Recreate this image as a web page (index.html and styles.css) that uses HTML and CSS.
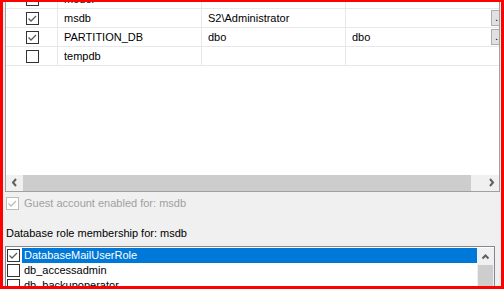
FILE: index.html
```html
<!DOCTYPE html>
<html lang="en">
<head>
    <meta charset="UTF-8">
    <title>User Mapping</title>
    <link rel="stylesheet" href="styles.css">
</head>
<body>
    <div class="frame">
        <div class="grid">
            <div class="grid-view">
                <div class="rows">
                    <div class="row">
                        <div class="cell c-check"><span class="chk"></span></div>
                        <div class="cell c-name">model</div>
                        <div class="cell c-user"></div>
                        <div class="cell c-schema"></div>
                    </div>
                    <div class="row">
                        <div class="cell c-check">
                            <span class="chk"><svg width="11" height="11" viewBox="0 0 11 11"><polyline points="1.5,5.5 4,8 9,3" fill="none" stroke="#5c5c5c" stroke-width="1.3"/></svg></span>
                        </div>
                        <div class="cell c-name">msdb</div>
                        <div class="cell c-user">S2\Administrator</div>
                        <div class="cell c-schema"><span></span><span class="ellipsis">...</span></div>
                    </div>
                    <div class="row">
                        <div class="cell c-check">
                            <span class="chk"><svg width="11" height="11" viewBox="0 0 11 11"><polyline points="1.5,5.5 4,8 9,3" fill="none" stroke="#5c5c5c" stroke-width="1.3"/></svg></span>
                        </div>
                        <div class="cell c-name">PARTITION_DB</div>
                        <div class="cell c-user">dbo</div>
                        <div class="cell c-schema"><span>dbo</span><span class="ellipsis">...</span></div>
                    </div>
                    <div class="row">
                        <div class="cell c-check"><span class="chk"></span></div>
                        <div class="cell c-name">tempdb</div>
                        <div class="cell c-user"></div>
                        <div class="cell c-schema"></div>
                    </div>
                </div>
            </div>
            <div class="hscroll">
                <div class="sb-btn"><svg width="17" height="16" viewBox="0 0 17 16"><polyline points="10,4 7,7.5 10,11" fill="none" stroke="#606060" stroke-width="2"/></svg></div>
                <div class="sb-thumb"></div>
                <div class="sb-track"></div>
                <div class="sb-btn"><svg width="17" height="16" viewBox="0 0 17 16"><polyline points="8,4 11,7.5 8,11" fill="none" stroke="#606060" stroke-width="2"/></svg></div>
            </div>
        </div>

        <div class="guest">
            <span class="chk disabled"><svg width="11" height="11" viewBox="0 0 11 11"><polyline points="1.5,5.5 4,8 9,3" fill="none" stroke="#bcbcbc" stroke-width="1.3"/></svg></span>
            <span>Guest account enabled for: msdb</span>
        </div>

        <div class="caption">Database role membership for: msdb</div>

        <div class="list">
            <div class="list-items">
                <div class="item">
                    <span class="chk"><svg width="11" height="11" viewBox="0 0 11 11"><polyline points="1.5,5.5 4,8 9,3" fill="none" stroke="#5c5c5c" stroke-width="1.3"/></svg></span>
                    <span class="item-text selected">DatabaseMailUserRole</span>
                </div>
                <div class="item">
                    <span class="chk"></span>
                    <span class="item-text">db_accessadmin</span>
                </div>
                <div class="item">
                    <span class="chk"></span>
                    <span class="item-text">db_backupoperator</span>
                </div>
            </div>
            <div class="vscroll">
                <div class="sb-btn-v"><svg width="17" height="17" viewBox="0 0 17 17"><polyline points="5.5,10.5 8.5,7.5 11.5,10.5" fill="none" stroke="#606060" stroke-width="2"/></svg></div>
                <div class="sb-thumb-v"></div>
            </div>
        </div>
    </div>
</body>
</html>
```

FILE: styles.css
```css
body {
    margin: 0;
}
.frame {
    box-sizing: border-box;
    height: 289px;
    border: 3px solid #ff0000;
    border-top-width: 2px;
    padding: 0 1px 0 2px;
    background-color: #f0f0f0;
    overflow: hidden;
    font-family: "Liberation Sans", Arial, sans-serif;
    font-size: 11px;
    color: #000;
}
.grid {
    margin-top: -13px;
    border: 1px solid #a0a0a0;
    background-color: #fff;
    overflow: hidden;
}
.grid-view {
    height: 185px;
    overflow: hidden;
}
.rows {
    width: max-content;
}
.row {
    display: flex;
    box-sizing: border-box;
    height: 19px;
    border-bottom: 1px solid #e8e8e8;
}
.cell {
    box-sizing: border-box;
    display: flex;
    align-items: center;
    border-right: 1px solid #e8e8e8;
    padding-left: 6px;
    line-height: 18px;
    white-space: nowrap;
}
.c-check {
    width: 52px;
    padding-left: 0;
    justify-content: center;
}
.c-check .chk {
    margin-left: 1px;
}
.c-name,
.c-user {
    width: 144px;
}
.c-schema {
    width: 164px;
    border-right: none;
}
.ellipsis {
    box-sizing: border-box;
    align-self: flex-start;
    width: 17px;
    height: 16px;
    margin: 1px 2px 0 auto;
    background-color: #e1e1e1;
    border: 1px solid #adadad;
    line-height: 13px;
    text-align: center;
}
.chk {
    display: inline-block;
    flex-shrink: 0;
    width: 11px;
    height: 11px;
    border: 1px solid #333;
    background-color: #fff;
}
.chk svg {
    display: block;
}
.chk.disabled {
    border-color: #bcbcbc;
}
.hscroll {
    display: flex;
    height: 16px;
    background-color: #f0f0f0;
}
.sb-btn {
    width: 17px;
    flex-shrink: 0;
}
.sb-btn svg,
.sb-btn-v svg {
    display: block;
}
.sb-thumb {
    width: 448px;
    background-color: #cdcdcd;
}
.sb-track {
    flex: 1;
}
.guest {
    display: flex;
    align-items: center;
    height: 13px;
    margin: 5px 0 0 1px;
    line-height: 13px;
    color: #a0a0a0;
}
.guest .chk {
    margin-right: 5px;
}
.caption {
    margin: 17px 0 0 1px;
    line-height: 13px;
}
.list {
    display: flex;
    height: 60px;
    margin: 6px 5px 0 0;
    padding: 1px 0 0 1px;
    border: 1px solid #828790;
    background-color: #fff;
}
.list-items {
    flex: 1;
}
.item {
    display: flex;
    align-items: center;
    height: 15px;
}
.item .chk {
    margin-right: 2px;
}
.item-text {
    flex: 1;
    line-height: 15px;
    padding-left: 2px;
    white-space: nowrap;
}
.item-text.selected {
    background-color: #0078d7;
    color: #fff;
}
.vscroll {
    width: 17px;
    background-color: #f0f0f0;
}
.sb-btn-v {
    height: 17px;
}
.sb-thumb-v {
    height: 60px;
    margin: 0 1px;
    background-color: #cdcdcd;
}
```
